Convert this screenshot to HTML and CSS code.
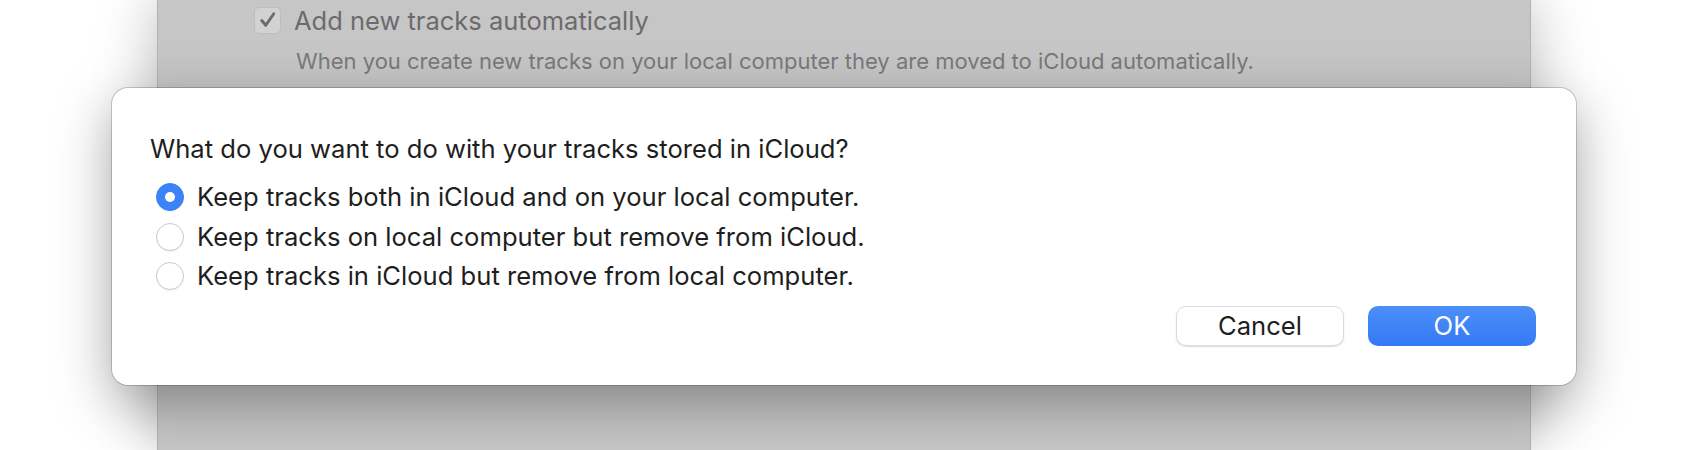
FILE: index.html
```html
<!DOCTYPE html>
<html lang="en">
<head>
<meta charset="utf-8">
<title>iCloud tracks</title>
<link rel="stylesheet" href="styles.css">
</head>
<body>
<div class="stage">
  <div class="window">
    <div class="opt">
      <span class="checkbox">
        <svg viewBox="0 0 26 26" width="26" height="26"><path d="M7 13.5 L11.2 18.5 L19.5 6.5" fill="none" stroke="#6a6a6a" stroke-width="3" stroke-linecap="round" stroke-linejoin="round"/></svg>
      </span>
      <span class="opt-label">Add new tracks automatically</span>
    </div>
    <p class="opt-desc">When you create new tracks on your local computer they are moved to iCloud automatically.</p>
  </div>

  <div class="sheet">
    <p class="sheet-title">What do you want to do with your tracks stored in iCloud?</p>
    <div class="radios">
      <div class="radio-row"><span class="radio radio-on"></span><span class="radio-label">Keep tracks both in iCloud and on your local computer.</span></div>
      <div class="radio-row"><span class="radio"></span><span class="radio-label">Keep tracks on local computer but remove from iCloud.</span></div>
      <div class="radio-row"><span class="radio"></span><span class="radio-label">Keep tracks in iCloud but remove from local computer.</span></div>
    </div>
    <div class="actions">
      <button class="btn btn-cancel">Cancel</button>
      <button class="btn btn-ok">OK</button>
    </div>
  </div>
</div>
</body>
</html>
```

FILE: styles.css
```css
* { box-sizing: border-box; }

html, body {
  margin: 0;
  padding: 0;
  background: #ffffff;
}

body {
  font-family: "Inter", "Liberation Sans", sans-serif;
  color: #1f1f1f;
}

.stage {
  position: relative;
  width: 1688px;
  height: 450px;
  overflow: hidden;
  background: #ffffff;
}

.window {
  margin-left: 157px;
  width: 1374px;
  height: 450px;
  background: #c7c6c7;
  box-shadow: 0 0 55px rgba(0, 0, 0, 0.28);
  padding: 7px 0 0 96px;
  border-left: 1px solid #b4b3b4;
  border-right: 1px solid #b4b3b4;
}

.opt {
  display: flex;
  align-items: center;
  gap: 13px;
  height: 26px;
}

.checkbox {
  width: 27px;
  height: 27px;
  border-radius: 5px;
  background: #d3d2d3;
  border: 1px solid #bebdbe;
  display: flex;
  align-items: center;
  justify-content: center;
}

.checkbox svg { display: block; }

.opt-label {
  font-size: 25.5px;
  color: #6c6b6c;
}

.opt-desc {
  margin: 15px 0 0 42px;
  font-size: 22px;
  color: #7a797a;
}

.sheet {
  position: absolute;
  left: 112px;
  top: 88px;
  width: 1464px;
  height: 297px;
  background: #ffffff;
  border-radius: 16px;
  box-shadow: 0 0 0 1px rgba(0, 0, 0, 0.18), 0 18px 55px rgba(0, 0, 0, 0.34);
  padding: 45px 40px 39px 38px;
  display: flex;
  flex-direction: column;
}

.sheet-title {
  margin: 0 0 12px 0;
  font-size: 25.6px;
  line-height: 32px;
  color: #1e1e1e;
}

.radios {
  display: flex;
  flex-direction: column;
}

.radio-row {
  display: flex;
  align-items: center;
  height: 39.7px;
  padding-left: 6px;
  gap: 13px;
}

.radio {
  width: 28px;
  height: 28px;
  border-radius: 50%;
  background: #ffffff;
  border: 1px solid #cbcacb;
  box-shadow: 0 1px 1px rgba(0, 0, 0, 0.06);
  flex: none;
  position: relative;
}

.radio-on {
  background: #3b83f7;
  border-color: #3a80f3;
}

.radio-on::after {
  content: "";
  position: absolute;
  left: 8px;
  top: 8px;
  width: 10px;
  height: 10px;
  border-radius: 50%;
  background: #ffffff;
}

.radio-label {
  font-size: 25.6px;
  line-height: 32px;
  color: #1e1e1e;
}

.actions {
  margin-top: auto;
  display: flex;
  justify-content: flex-end;
  gap: 24px;
}

.btn {
  width: 168px;
  height: 40px;
  border-radius: 10px;
  font-family: inherit;
  font-size: 25.6px;
  line-height: 38px;
  padding: 0;
  cursor: default;
}

.btn-cancel {
  background: #ffffff;
  color: #1e1e1e;
  border: 1px solid #dcdbdc;
  box-shadow: 0 1px 1.5px rgba(0, 0, 0, 0.14);
}

.btn-ok {
  background: linear-gradient(#4b8ff8, #3479f6);
  color: #ffffff;
  border: none;
}
```
